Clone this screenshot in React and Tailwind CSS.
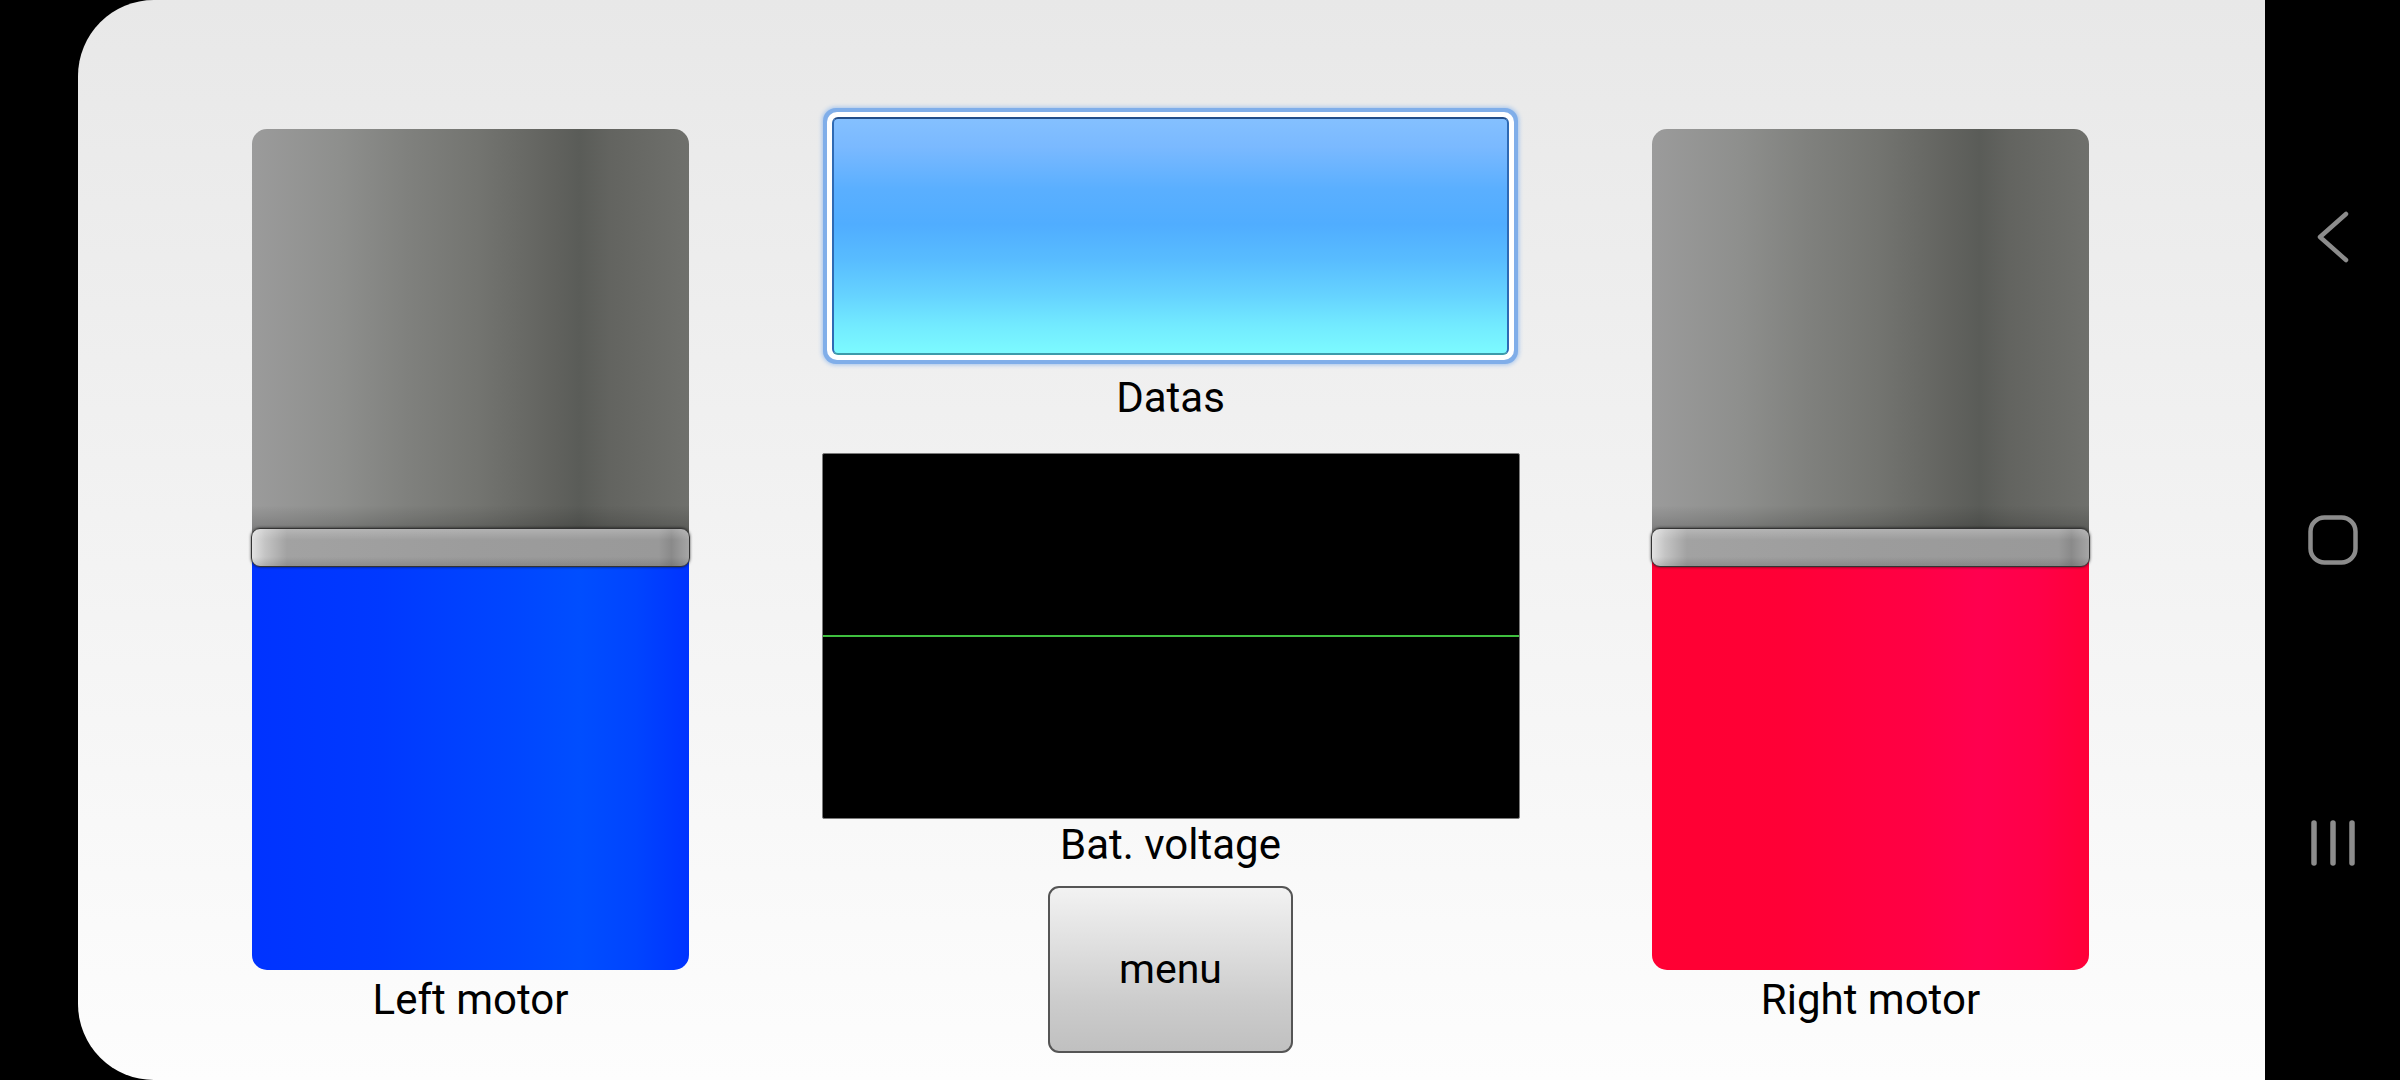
const font = { fontFamily: 'Roboto, "Noto Sans", sans-serif' };

const MotorSlider = ({ label, fill }) => {
  return (
    <div className="flex w-[437px] flex-col items-center pt-[129px]">
      <div className="relative h-[841px] w-[437px]">
        <div className="flex h-full w-full flex-col overflow-hidden rounded-[15px]">
          {/* upper (empty) part of the track */}
          <div className="h-[418px] w-full bg-[linear-gradient(to_bottom,transparent_90%,rgba(0,0,0,0.3)_100%),linear-gradient(to_right,#9b9b9b_0%,#8e8f8d_20%,#80817e_35%,#737470_52%,#62635f_68%,#5a5c58_75%,#636460_82%,#6f706c_100%)]" />
          {/* filled part */}
          <div className={`flex-1 w-full ${fill}`} />
        </div>
        {/* knob */}
        <div className="absolute left-[-1px] right-[-1px] top-[399px] h-[39px] rounded-[9px] border-[1.5px] border-[#333333] bg-[linear-gradient(to_bottom,rgba(255,255,255,0.22)_0%,transparent_30%,transparent_75%,rgba(0,0,0,0.12)_100%),linear-gradient(to_right,#e2e2e2_0%,#c4c4c4_3%,#a2a2a2_8%,#9c9c9c_50%,#999999_93%,#8a8a8a_96%,#a6a6a6_100%)] shadow-[0_0_3px_rgba(0,0,0,0.7)]" />
      </div>
      <div className="mt-[6px] text-[42px] leading-[47px] text-black" style={font}>
        {label}
      </div>
    </div>
  );
};

const NavBar = () => (
  <div className="flex h-full w-[135px] flex-col items-center bg-black">
    {/* back */}
    <svg className="mt-[210px]" width="40" height="54" viewBox="0 0 40 54" fill="none">
      <polyline points="33,4 7,27 33,50" stroke="#8c8c8c" strokeWidth="4.5" strokeLinecap="round" strokeLinejoin="round" />
    </svg>
    {/* home */}
    <svg className="mt-[248px]" width="56" height="56" viewBox="0 0 56 56" fill="none">
      <rect x="5.5" y="5.5" width="45" height="45" rx="14" stroke="#8c8c8c" strokeWidth="4.5" />
    </svg>
    {/* recents */}
    <svg className="mt-[250px]" width="46" height="50" viewBox="0 0 46 50" fill="none">
      <line x1="4" y1="5" x2="4" y2="45" stroke="#8c8c8c" strokeWidth="5.5" strokeLinecap="round" />
      <line x1="23" y1="5" x2="23" y2="45" stroke="#8c8c8c" strokeWidth="5.5" strokeLinecap="round" />
      <line x1="42" y1="5" x2="42" y2="45" stroke="#8c8c8c" strokeWidth="5.5" strokeLinecap="round" />
    </svg>
  </div>
);

export default function App() {
  return (
    <div className="flex h-[1080px] w-[2400px] overflow-hidden bg-black" style={font}>
      <div className="w-[78px] shrink-0 bg-black" />

      <div className="flex flex-1 justify-between rounded-l-[76px] bg-[linear-gradient(to_bottom,#e8e8e8,#fdfdfd)] pl-[174px] pr-[176px]">
        <MotorSlider
          label="Left motor"
          fill="bg-[linear-gradient(to_right,#0033ff_0%,#0039ff_30%,#0046ff_60%,#004eff_75%,#0044ff_88%,#0033ff_100%)]"
        />

        {/* center column */}
        <div className="flex w-[698px] flex-col items-center pt-[108px]">
          {/* Datas panel */}
          <div className="h-[256px] w-[695px] rounded-[13px] bg-[#80aee9] p-[4px] shadow-[0_0_4px_1px_#a3c4ee]">
            <div className="h-full w-full rounded-[10px] bg-white p-[5px]">
              <div className="h-full w-full rounded-[6px] border-2 border-x-[#2f6ab4] border-t-[#234e8a] border-b-[#3c9aaa] bg-[linear-gradient(to_bottom,#84c0ff_0%,#7ab9ff_12%,#5aafff_30%,#50adff_45%,#58bcff_60%,#65d2ff_75%,#72eaff_88%,#7cfaff_100%)]" />
            </div>
          </div>
          <div className="mt-[10px] text-[42px] leading-[47px] text-black">Datas</div>

          {/* battery voltage chart */}
          <div className="relative mt-[32px] flex h-[366px] w-[698px] items-center rounded-[2px] border-[1.5px] border-[#7a7a7a] bg-black">
            <div className="h-[2px] w-full bg-[#3fbf3f]" />
          </div>
          <div className="mt-[2px] text-[42px] leading-[47px] text-black">Bat. voltage</div>

          {/* menu button */}
          <button className="mt-[18px] flex h-[167px] w-[245px] items-center justify-center rounded-[11px] border-[2.5px] border-[#555555] bg-[linear-gradient(to_bottom,#f2f2f2_0%,#e2e2e2_30%,#cccccc_70%,#c0c0c0_100%)] text-[41px] text-black">
            menu
          </button>
        </div>

        <MotorSlider
          label="Right motor"
          fill="bg-[linear-gradient(to_right,#ff0033_0%,#ff0036_30%,#ff0044_60%,#ff004f_75%,#ff0048_88%,#ff0038_100%)]"
        />
      </div>

      <NavBar />
    </div>
  );
}
